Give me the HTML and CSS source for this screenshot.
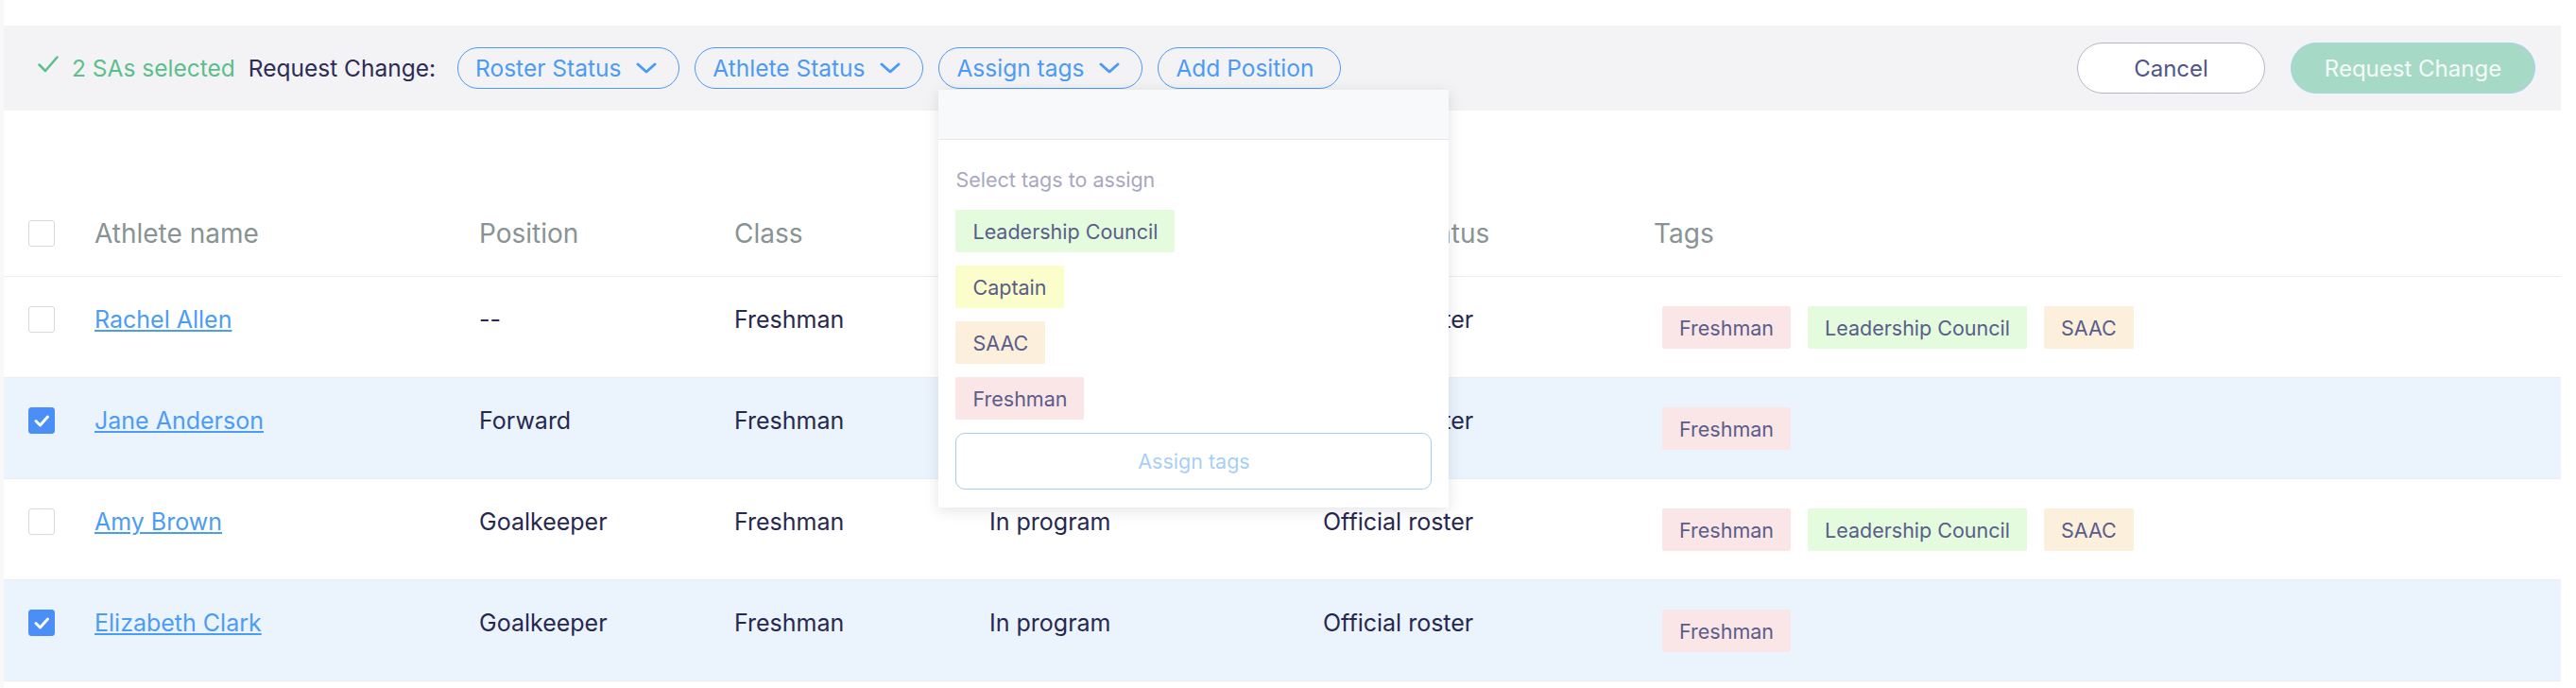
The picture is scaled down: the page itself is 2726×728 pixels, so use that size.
FILE: index.html
```html
<!DOCTYPE html>
<html lang="en">
<head>
<meta charset="utf-8">
<title>Roster</title>
<link rel="stylesheet" href="styles.css">
</head>
<body>
<div class="page">
  <div class="bulkbar">
    <div class="selected">
      <svg class="ok-icon" viewBox="0 0 22 18" width="22" height="18"><path d="M1.5 9.5 L8 16 L20.5 1.5" fill="none" stroke="#5bbf8c" stroke-width="2.5" stroke-linecap="round" stroke-linejoin="round"/></svg>
      <span>2 SAs selected</span>
    </div>
    <span class="bar-label">Request Change:</span>
    <div class="pills">
      <button class="pill">Roster Status<svg class="chev" viewBox="0 0 22 12" width="22" height="12"><path d="M2 2 L11 10 L20 2" fill="none" stroke="#4b9bf6" stroke-width="3" stroke-linecap="round" stroke-linejoin="round"/></svg></button>
      <button class="pill">Athlete Status<svg class="chev" viewBox="0 0 22 12" width="22" height="12"><path d="M2 2 L11 10 L20 2" fill="none" stroke="#4b9bf6" stroke-width="3" stroke-linecap="round" stroke-linejoin="round"/></svg></button>
      <div class="pill-wrap">
        <button class="pill">Assign tags<svg class="chev" viewBox="0 0 22 12" width="22" height="12"><path d="M2 2 L11 10 L20 2" fill="none" stroke="#4b9bf6" stroke-width="3" stroke-linecap="round" stroke-linejoin="round"/></svg></button>
        <div class="dropdown">
          <div class="dd-head"></div>
          <div class="dd-body">
            <div class="dd-label">Select tags to assign</div>
            <div class="dd-tags">
              <span class="tag tag-green">Leadership Council</span>
              <span class="tag tag-yellow">Captain</span>
              <span class="tag tag-orange">SAAC</span>
              <span class="tag tag-red">Freshman</span>
            </div>
            <button class="dd-assign">Assign tags</button>
          </div>
        </div>
      </div>
      <button class="pill pill-plain">Add Position</button>
    </div>
    <div class="actions">
      <button class="btn-cancel">Cancel</button>
      <button class="btn-primary">Request Change</button>
    </div>
  </div>

  <div class="table">
    <div class="row head">
      <div class="cell cb-cell"><span class="cb"></span></div>
      <div class="cell">Athlete name</div>
      <div class="cell">Position</div>
      <div class="cell">Class</div>
      <div class="cell">Athlete Status</div>
      <div class="cell">Roster Status</div>
      <div class="cell">Tags</div>
    </div>
    <div class="row">
      <div class="cell cb-cell"><span class="cb"></span></div>
      <div class="cell"><a class="name" href="#">Rachel Allen</a></div>
      <div class="cell">--</div>
      <div class="cell">Freshman</div>
      <div class="cell">In program</div>
      <div class="cell">Official roster</div>
      <div class="cell tags"><span class="tag tag-red">Freshman</span><span class="tag tag-green">Leadership Council</span><span class="tag tag-orange">SAAC</span></div>
    </div>
    <div class="row sel">
      <div class="cell cb-cell"><span class="cb on"><svg viewBox="0 0 28 28" width="28" height="28"><path d="M8 14.5 L12.5 19 L20.5 10" fill="none" stroke="#fff" stroke-width="3" stroke-linecap="round" stroke-linejoin="round"/></svg></span></div>
      <div class="cell"><a class="name" href="#">Jane Anderson</a></div>
      <div class="cell">Forward</div>
      <div class="cell">Freshman</div>
      <div class="cell">In program</div>
      <div class="cell">Official roster</div>
      <div class="cell tags"><span class="tag tag-red">Freshman</span></div>
    </div>
    <div class="row">
      <div class="cell cb-cell"><span class="cb"></span></div>
      <div class="cell"><a class="name" href="#">Amy Brown</a></div>
      <div class="cell">Goalkeeper</div>
      <div class="cell">Freshman</div>
      <div class="cell">In program</div>
      <div class="cell">Official roster</div>
      <div class="cell tags"><span class="tag tag-red">Freshman</span><span class="tag tag-green">Leadership Council</span><span class="tag tag-orange">SAAC</span></div>
    </div>
    <div class="row sel">
      <div class="cell cb-cell"><span class="cb on"><svg viewBox="0 0 28 28" width="28" height="28"><path d="M8 14.5 L12.5 19 L20.5 10" fill="none" stroke="#fff" stroke-width="3" stroke-linecap="round" stroke-linejoin="round"/></svg></span></div>
      <div class="cell"><a class="name" href="#">Elizabeth Clark</a></div>
      <div class="cell">Goalkeeper</div>
      <div class="cell">Freshman</div>
      <div class="cell">In program</div>
      <div class="cell">Official roster</div>
      <div class="cell tags"><span class="tag tag-red">Freshman</span></div>
    </div>
  </div>
</div>
</body>
</html>
```

FILE: styles.css
```css
* { box-sizing: border-box; }

html, body {
  margin: 0;
  padding: 0;
  background: #ffffff;
}

body {
  font-family: Inter, "Noto Sans", "Liberation Sans", sans-serif;
  color: #27284f;
  width: 2726px;
  height: 728px;
  overflow: hidden;
}

.page {
  padding: 27px 16px 0 0;
  border-left: 4px solid #f8f8f9;
  height: 728px;
}

/* ---------- bulk action bar ---------- */
.bulkbar {
  height: 90px;
  background: #f3f3f5;
  display: flex;
  align-items: center;
  padding: 0 27px 0 36px;
}

.selected {
  display: flex;
  align-items: center;
  gap: 14px;
  color: #5bbf8c;
  font-size: 24.5px;
}

.ok-icon { display: block; margin-top: -8px; }

.bar-label {
  margin-left: 14px;
  font-size: 24.5px;
  color: #2c2c56;
}

.pills {
  display: flex;
  align-items: center;
  gap: 16px;
  margin-left: 23px;
}

.pill-wrap { position: relative; }

.pill {
  height: 44px;
  border: 1px solid #4b9bf6;
  border-radius: 22px;
  background: transparent;
  color: #4b9bf6;
  font-family: inherit;
  font-size: 24.5px;
  padding: 0 23px 0 18px;
  display: flex;
  align-items: center;
  gap: 16px;
  cursor: pointer;
}

.pill-plain { padding-right: 28px; }

.chev { display: block; }

.actions {
  margin-left: auto;
  display: flex;
  align-items: center;
  gap: 27px;
}

.btn-cancel, .btn-primary {
  height: 54px;
  border-radius: 27px;
  font-family: inherit;
  font-size: 24px;
  text-align: center;
  padding: 0;
}

.btn-cancel {
  width: 199px;
  background: #ffffff;
  border: 1px solid #b5b5c9;
  color: #4f5687;
}

.btn-primary {
  width: 259px;
  background: #a7dac6;
  border: 1px solid #a9d2ec;
  color: #f4fbf8;
}

/* ---------- dropdown ---------- */
.dropdown {
  position: absolute;
  left: 0;
  top: 45px;
  width: 540px;
  background: #ffffff;
  box-shadow: 0 3px 14px rgba(40, 44, 70, 0.13);
  z-index: 5;
}

.dd-head {
  height: 53px;
  background: #f8f9fb;
  border-bottom: 1px solid #e6e8ee;
}

.dd-body {
  padding: 29px 18px 19px 18px;
}

.dd-label {
  font-size: 21.5px;
  line-height: 26px;
  color: #a8a8c0;
  margin-bottom: 19px;
}

.dd-tags {
  display: flex;
  flex-direction: column;
  align-items: flex-start;
  gap: 14px;
}

.dd-assign {
  display: block;
  width: 100%;
  height: 60px;
  margin-top: 14px;
  background: #ffffff;
  border: 1px solid #a5cef6;
  border-radius: 10px;
  color: #a8cff6;
  font-family: inherit;
  font-size: 21.5px;
}

/* ---------- tags ---------- */
.tag {
  display: inline-flex;
  align-items: center;
  height: 45px;
  padding: 0 18px;
  border-radius: 2px;
  font-size: 21.5px;
  color: #5a5d8a;
  white-space: nowrap;
}

.tag-red { background: #fae6e6; }
.tag-green { background: #e4fbdd; }
.tag-orange { background: #fcefdc; }
.tag-yellow { background: #fbfecb; }

/* ---------- table ---------- */
.table { margin-top: 85px; }

.row {
  display: grid;
  grid-template-columns: 96px 407px 270px 270px 353px 350px 1fr;
  align-items: start;
  height: 107px;
  padding-top: 31px;
  border-bottom: 1px solid #ededf0;
  font-size: 25px;
  line-height: 28px;
}

.row.head {
  height: 91px;
  padding-top: 0;
  align-items: center;
  font-size: 28px;
  color: #899393;
}

.row.sel { background: #ebf4fd; }

.cell { white-space: nowrap; }

.cb-cell { padding-left: 26px; display: flex; }

.cb {
  display: block;
  width: 28px;
  height: 28px;
  border: 1px solid #d9d9dc;
  border-radius: 3px;
  background: #ffffff;
}

.cb.on {
  background: #4a8ff7;
  border-color: #4a8ff7;
}

.cb.on svg { display: block; margin: -1px; }

.name {
  color: #4d9cf4;
  text-decoration: underline;
  text-underline-offset: 2px;
}

.tags {
  display: flex;
  gap: 18px;
  padding-left: 9px;
}
```
